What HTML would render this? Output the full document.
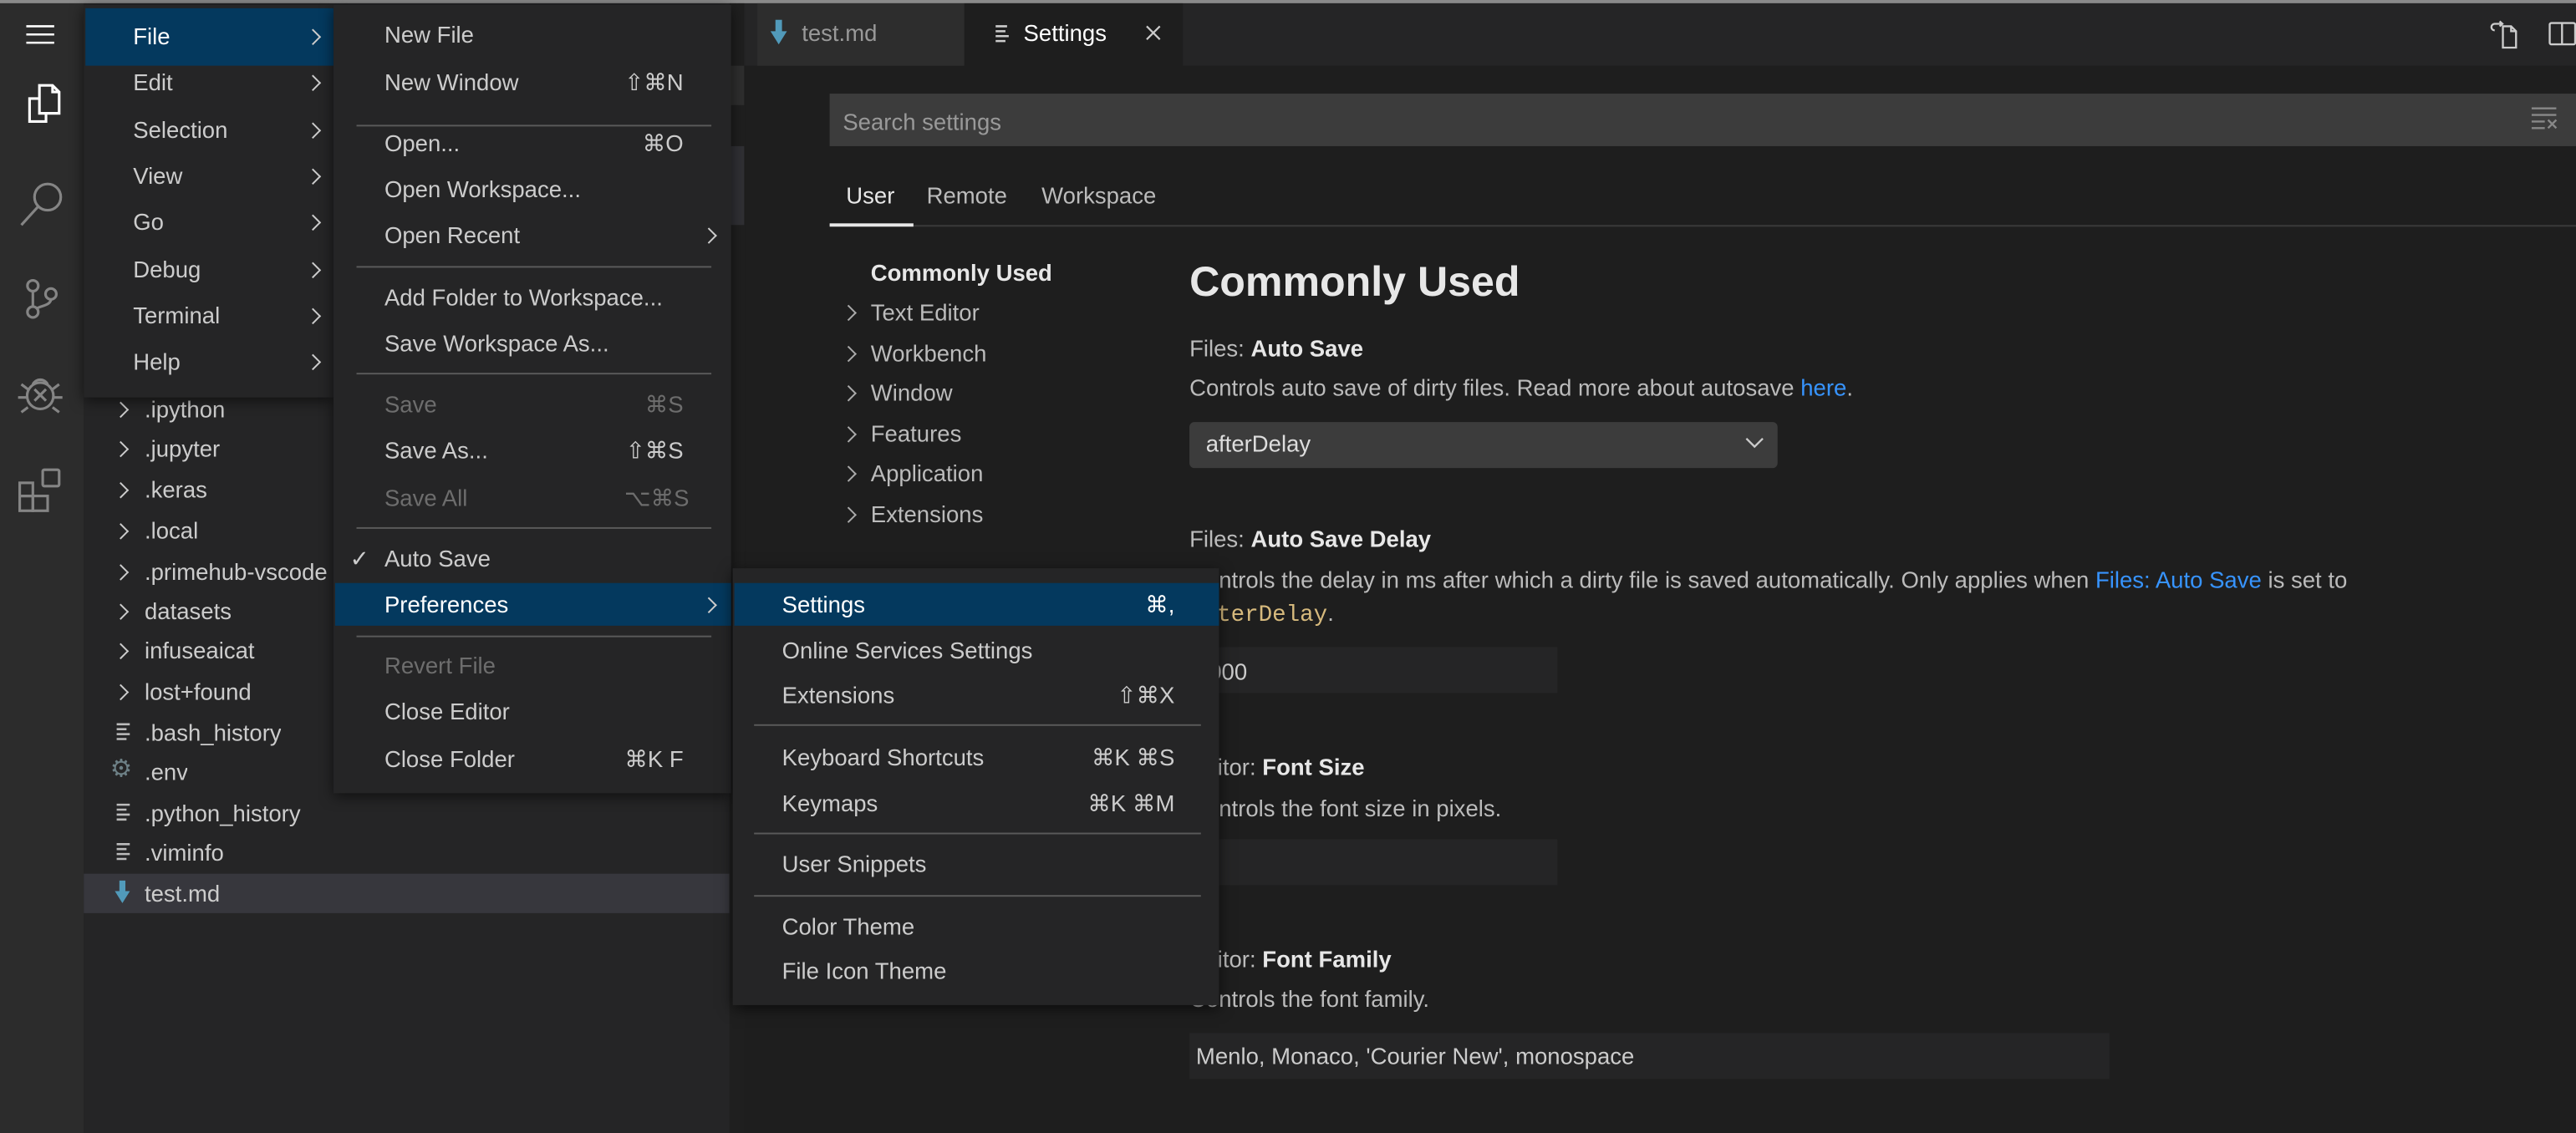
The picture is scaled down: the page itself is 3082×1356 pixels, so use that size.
<!DOCTYPE html>
<html><head><meta charset="utf-8"><style>
html,body{margin:0;padding:0;background:#1e1e1e;overflow:hidden;width:3082px;height:1356px}
#s{position:absolute;left:0;top:0;width:1568px;height:690px;transform:scale(1.965561);transform-origin:0 0;font-family:"Liberation Sans",sans-serif;font-size:14px;color:#ccc;background:#1e1e1e;overflow:hidden}
.a{position:absolute}
.t{position:absolute;white-space:nowrap;line-height:18px}
.menu{position:absolute;background:#252526;box-shadow:0 2px 8px rgba(0,0,0,.6)}
.sep{position:absolute;height:1px;background:#5a5a5a}
.hl{position:absolute;background:#04395e}
.chev{position:absolute;width:6px;height:6px;border-right:1.2px solid #bbb;border-top:1.2px solid #bbb;transform:rotate(45deg)}
svg{position:absolute}
</style></head><body><div id="s">
<div class="a" style="left:0;top:0;width:1568px;height:2px;background:#8a8a8a"></div>
<div class="a" style="left:0;top:2px;width:51px;height:688px;background:#2c2c2c"></div>
<svg style="left:14px;top:14px" width="22" height="16" viewBox="0 0 22 16"><path d="M2 2h17M2 7h17M2 12h17" stroke="#fff" stroke-width="1.3"/></svg>
<svg style="left:10px;top:50px" width="30" height="30" viewBox="0 0 30 30" fill="none" stroke="#fff" stroke-width="1.6"><path d="M14 2h8l4 4v13H14z"/><path d="M22 2v4h4"/><path d="M14 10H8v14h10v-5"/></svg>
<svg style="left:10px;top:108px" width="30" height="32" viewBox="0 0 30 32" fill="none" stroke="#858585" stroke-width="1.6"><circle cx="19" cy="12" r="8"/><path d="M13 18L3 29"/></svg>
<svg style="left:10px;top:166px" width="30" height="32" viewBox="0 0 30 32" fill="none" stroke="#858585" stroke-width="1.6"><circle cx="10" cy="8" r="3.3"/><circle cx="10" cy="24" r="3.3"/><circle cx="21" cy="13" r="3.3"/><path d="M10 11v10M21 16c0 4-6 4-9 6"/></svg>
<svg style="left:9px;top:224px" width="32" height="32" viewBox="0 0 32 32" fill="none" stroke="#858585" stroke-width="1.6"><circle cx="15.5" cy="17" r="8"/><path d="M11 10a5 5 0 0 1 9 0M12 13l7 7M19 13l-7 7M2 18h5M24 18h5M4 10l4 3M27 10l-4 3M4 27l4-3M27 27l-4-3"/></svg>
<svg style="left:9px;top:283px" width="32" height="32" viewBox="0 0 32 32" fill="none" stroke="#858585" stroke-width="1.6"><rect x="3" y="11" width="8" height="8"/><rect x="3" y="19" width="8" height="9"/><rect x="11" y="19" width="9" height="9"/><rect x="17" y="3" width="10" height="10" rx="1"/></svg>
<div class="a" style="left:51px;top:2px;width:402px;height:688px;background:#252526"></div>
<div class="a" style="left:51px;top:532px;width:393px;height:24px;background:#37373d"></div>
<div class="a" style="left:444px;top:2px;width:9px;height:688px;background:#1f1f1f"></div>
<div class="a" style="left:444px;top:40px;width:9px;height:24px;background:#2e2e2e"></div>
<div class="a" style="left:444px;top:89px;width:9px;height:48px;background:#303034"></div>
<div id="files"></div>
<div class="a" style="left:453px;top:2px;width:1115px;height:38px;background:#252526"></div>
<div class="a" style="left:461px;top:2px;width:126px;height:38px;background:#2d2d2d"></div>
<div class="a" style="left:587px;top:2px;width:133px;height:38px;background:#1e1e1e"></div>
<svg style="left:468px;top:12px" width="12" height="16" viewBox="0 0 12 16"><path d="M4 0h4v7h3l-5 8-5-8h3z" fill="#519aba"/></svg>
<div class="t" style="left:488px;top:11px;color:#999">test.md</div>
<svg style="left:606px;top:15px" width="10" height="11" viewBox="0 0 10 11"><path d="M0 1h7M0 4h6M0 7h8M0 10h6" stroke="#ccc" stroke-width="1.3"/></svg>
<div class="t" style="left:623px;top:11px;color:#fff">Settings</div>
<svg style="left:697px;top:15px" width="10" height="10" viewBox="0 0 10 10"><path d="M1 1l8 8M9 1l-8 8" stroke="#ccc" stroke-width="1.1"/></svg>
<svg style="left:1515px;top:11px" width="20" height="20" viewBox="0 0 20 20" fill="none" stroke="#ccc" stroke-width="1.2"><path d="M8.5 5h5l3 3v10h-8z"/><path d="M13.5 5v3h3M8 3.5H3.5a2 2 0 0 0 0 4M6.5 2l1.7 1.5-1.7 1.5"/></svg>
<svg style="left:1551px;top:12px" width="17" height="17" viewBox="0 0 17 17" fill="none" stroke="#ccc" stroke-width="1.2"><rect x="1" y="2" width="15.5" height="13" rx="1"/><path d="M8.5 2v13"/></svg>
<div class="a" style="left:505px;top:57px;width:1063px;height:32px;background:#3c3c3c"></div>
<div class="t" style="left:513px;top:65px;color:#999">Search settings</div>
<svg style="left:1540px;top:64px" width="18" height="16" viewBox="0 0 18 16"><path d="M1 2h15M1 6h15M1 10h8M1 14h8M11 9l5 5M16 9l-5 5" stroke="#888" stroke-width="1.2"/></svg>
<div class="t" style="left:515px;top:110px;color:#e7e7e7">User</div>
<div class="t" style="left:564px;top:110px;color:#bbb">Remote</div>
<div class="t" style="left:634px;top:110px;color:#bbb">Workspace</div>
<div class="a" style="left:505px;top:137px;width:1063px;height:1px;background:#3a3a3a"></div>
<div class="a" style="left:505px;top:136px;width:51px;height:2px;background:#e7e7e7"></div>
<div class="t" style="left:530px;top:157px;color:#e7e7e7;font-weight:bold">Commonly Used</div>
<div id="nav"></div>
<div class="t" style="left:724px;top:157px;color:#e7e7e7;font-weight:bold;font-size:25.5px;line-height:30px">Commonly Used</div>
<div class="t" style="left:724px;top:203px;color:#ccc"><span style="color:#bbb">Files: </span><b style="color:#e7e7e7">Auto Save</b></div>
<div class="t" style="left:724px;top:227px;color:#bbb">Controls auto save of dirty files. Read more about autosave <span style="color:#3794ff">here</span>.</div>
<div class="a" style="left:724px;top:257px;width:358px;height:28px;background:#3c3c3c;border-radius:3px"></div>
<div class="t" style="left:734px;top:261px;color:#ddd">afterDelay</div>
<svg style="left:1062px;top:265px" width="12" height="10" viewBox="0 0 12 10"><path d="M1 2l5 5 5-5" stroke="#ccc" fill="none" stroke-width="1.2"/></svg>
<div class="t" style="left:724px;top:319px"><span style="color:#bbb">Files: </span><b style="color:#e7e7e7">Auto Save Delay</b></div>
<div class="t" style="left:724px;top:344px;color:#bbb">Controls the delay in ms after which a dirty file is saved automatically. Only applies when <span style="color:#3794ff">Files: Auto Save</span> is set to</div>
<div class="t" style="left:724px;top:364px;color:#bbb"><span style="font-family:'Liberation Mono',monospace;color:#d7ba7d">afterDelay</span>.</div>
<div class="a" style="left:724px;top:394px;width:224px;height:28px;background:#252526"></div>
<div class="t" style="left:728px;top:400px;color:#ccc">1000</div>
<div class="t" style="left:724px;top:458px"><span style="color:#bbb">Editor: </span><b style="color:#e7e7e7">Font Size</b></div>
<div class="t" style="left:724px;top:483px;color:#bbb">Controls the font size in pixels.</div>
<div class="a" style="left:724px;top:511px;width:224px;height:28px;background:#252526"></div>
<div class="t" style="left:724px;top:575px"><span style="color:#bbb">Editor: </span><b style="color:#e7e7e7">Font Family</b></div>
<div class="t" style="left:724px;top:599px;color:#bbb">Controls the font family.</div>
<div class="a" style="left:724px;top:629px;width:560px;height:28px;background:#252526"></div>
<div class="t" style="left:728px;top:634px;color:#ccc">Menlo, Monaco, 'Courier New', monospace</div>
<div class="menu" style="left:51px;top:3px;width:152px;height:239px"></div>
<div class="hl" style="left:52px;top:5px;width:151px;height:35px"></div>
<div id="mm"></div>
<div class="menu" style="left:203px;top:3px;width:242px;height:480px"></div>
<div class="hl" style="left:204px;top:355px;width:241px;height:26px"></div>
<div id="fm"></div>
<div class="menu" style="left:446px;top:346px;width:296px;height:266px"></div>
<div class="hl" style="left:447px;top:355px;width:295px;height:26px"></div>
<div id="pm"></div>
<script>
function T(l,t,txt,c,extra){return '<div class="t" style="left:'+l+'px;top:'+(t-9)+'px;color:'+c+';'+(extra||'')+'">'+txt+'</div>';}
function C(l,t,c){return '<div class="chev" style="left:'+l+'px;top:'+(t-3)+'px;border-color:'+(c||'#bbb')+'"></div>';}
var h='';
var files=[['.ipython',249,1],['.jupyter',273,1],['.keras',298,1],['.local',323,1],['.primehub-vscode',348,1],['datasets',372,1],['infuseaicat',396,1],['lost+found',421,1],['.bash_history',446,2],['.env',470,3],['.python_history',495,2],['.viminfo',519,2],['test.md',544,4]];
files.forEach(function(f){
 if(f[2]==1)h+=C(70,f[1],'#ccc');
 if(f[2]==2)h+='<svg style="left:71px;top:'+(f[1]-6)+'px" width="10" height="12" viewBox="0 0 10 12"><path d="M0 1h8M0 4h6M0 7h8M0 10h6" stroke="#bbb" stroke-width="1.3"/></svg>';
 if(f[2]==3)h+='<div class="t" style="left:67px;top:'+(f[1]-10)+'px;color:#6d8086;font-size:15px">⚙</div>';
 if(f[2]==4)h+='<svg style="left:69px;top:'+(f[1]-8)+'px" width="11" height="15" viewBox="0 0 12 16"><path d="M4 0h4v7h3l-5 8-5-8h3z" fill="#519aba"/></svg>';
 h+=T(88,f[1],f[0],'#ccc','max-width:356px;overflow:hidden');
});
document.getElementById('files').innerHTML=h;
h='';['Text Editor','Workbench','Window','Features','Application','Extensions'].forEach(function(n,i){var y=190+i*24.6;h+=C(513,y,'#aaa')+T(530,y,n,'#bbb');});
document.getElementById('nav').innerHTML=h;
h='';['File','Edit','Selection','View','Go','Debug','Terminal','Help'].forEach(function(n,i){var y=22+i*28.3;h+=T(81,y,n,i==0?'#fff':'#ccc')+C(187,y,'#ccc');});
document.getElementById('mm').innerHTML=h;
h='';
var fm=[['New File',21,''],['New Window',50,'⇧⌘N'],['s',76],['Open...',87,'⌘O'],['Open Workspace...',115,''],['Open Recent',143,'>'],['s',162],['Add Folder to Workspace...',181,''],['Save Workspace As...',209,''],['s',227],['Save',246,'⌘S',1],['Save As...',274,'⇧⌘S'],['Save All',303,'⌥⌘S',1],['s',321],['Auto Save',340,''],['Preferences',368,'>'],['s',387],['Revert File',405,'',1],['Close Editor',433,''],['Close Folder',462,'⌘K F']];
fm.forEach(function(m){
 if(m[0]=='s'){h+='<div class="sep" style="left:217px;top:'+m[1]+'px;width:216px"></div>';return;}
 var c=m[3]?'#6d6d6d':(m[0]=='Preferences'?'#fff':'#ccc');
 h+=T(234,m[1],m[0],c);
 if(m[2]=='>')h+=C(428,m[1],'#ccc');else if(m[2])h+=T(380,m[1],'<span style="display:inline-block;width:36px;text-align:right">'+m[2]+'</span>',c);
});
h+=T(213,340,'✓','#ccc');
document.getElementById('fm').innerHTML=h;
h='';
var pm=[['Settings',368,'⌘,'],['Online Services Settings',396,''],['Extensions',423,'⇧⌘X'],['s',441],['Keyboard Shortcuts',461,'⌘K ⌘S'],['Keymaps',489,'⌘K ⌘M'],['s',507],['User Snippets',526,''],['s',545],['Color Theme',564,''],['File Icon Theme',591,'']];
pm.forEach(function(m){
 if(m[0]=='s'){h+='<div class="sep" style="left:459px;top:'+m[1]+'px;width:272px"></div>';return;}
 var c=m[0]=='Settings'?'#fff':'#ccc';
 h+=T(476,m[1],m[0],c);
 if(m[2])h+=T(640,m[1],'<span style="display:inline-block;width:75px;text-align:right">'+m[2]+'</span>',c);
});
document.getElementById('pm').innerHTML=h;
</script>
</div></body></html>
